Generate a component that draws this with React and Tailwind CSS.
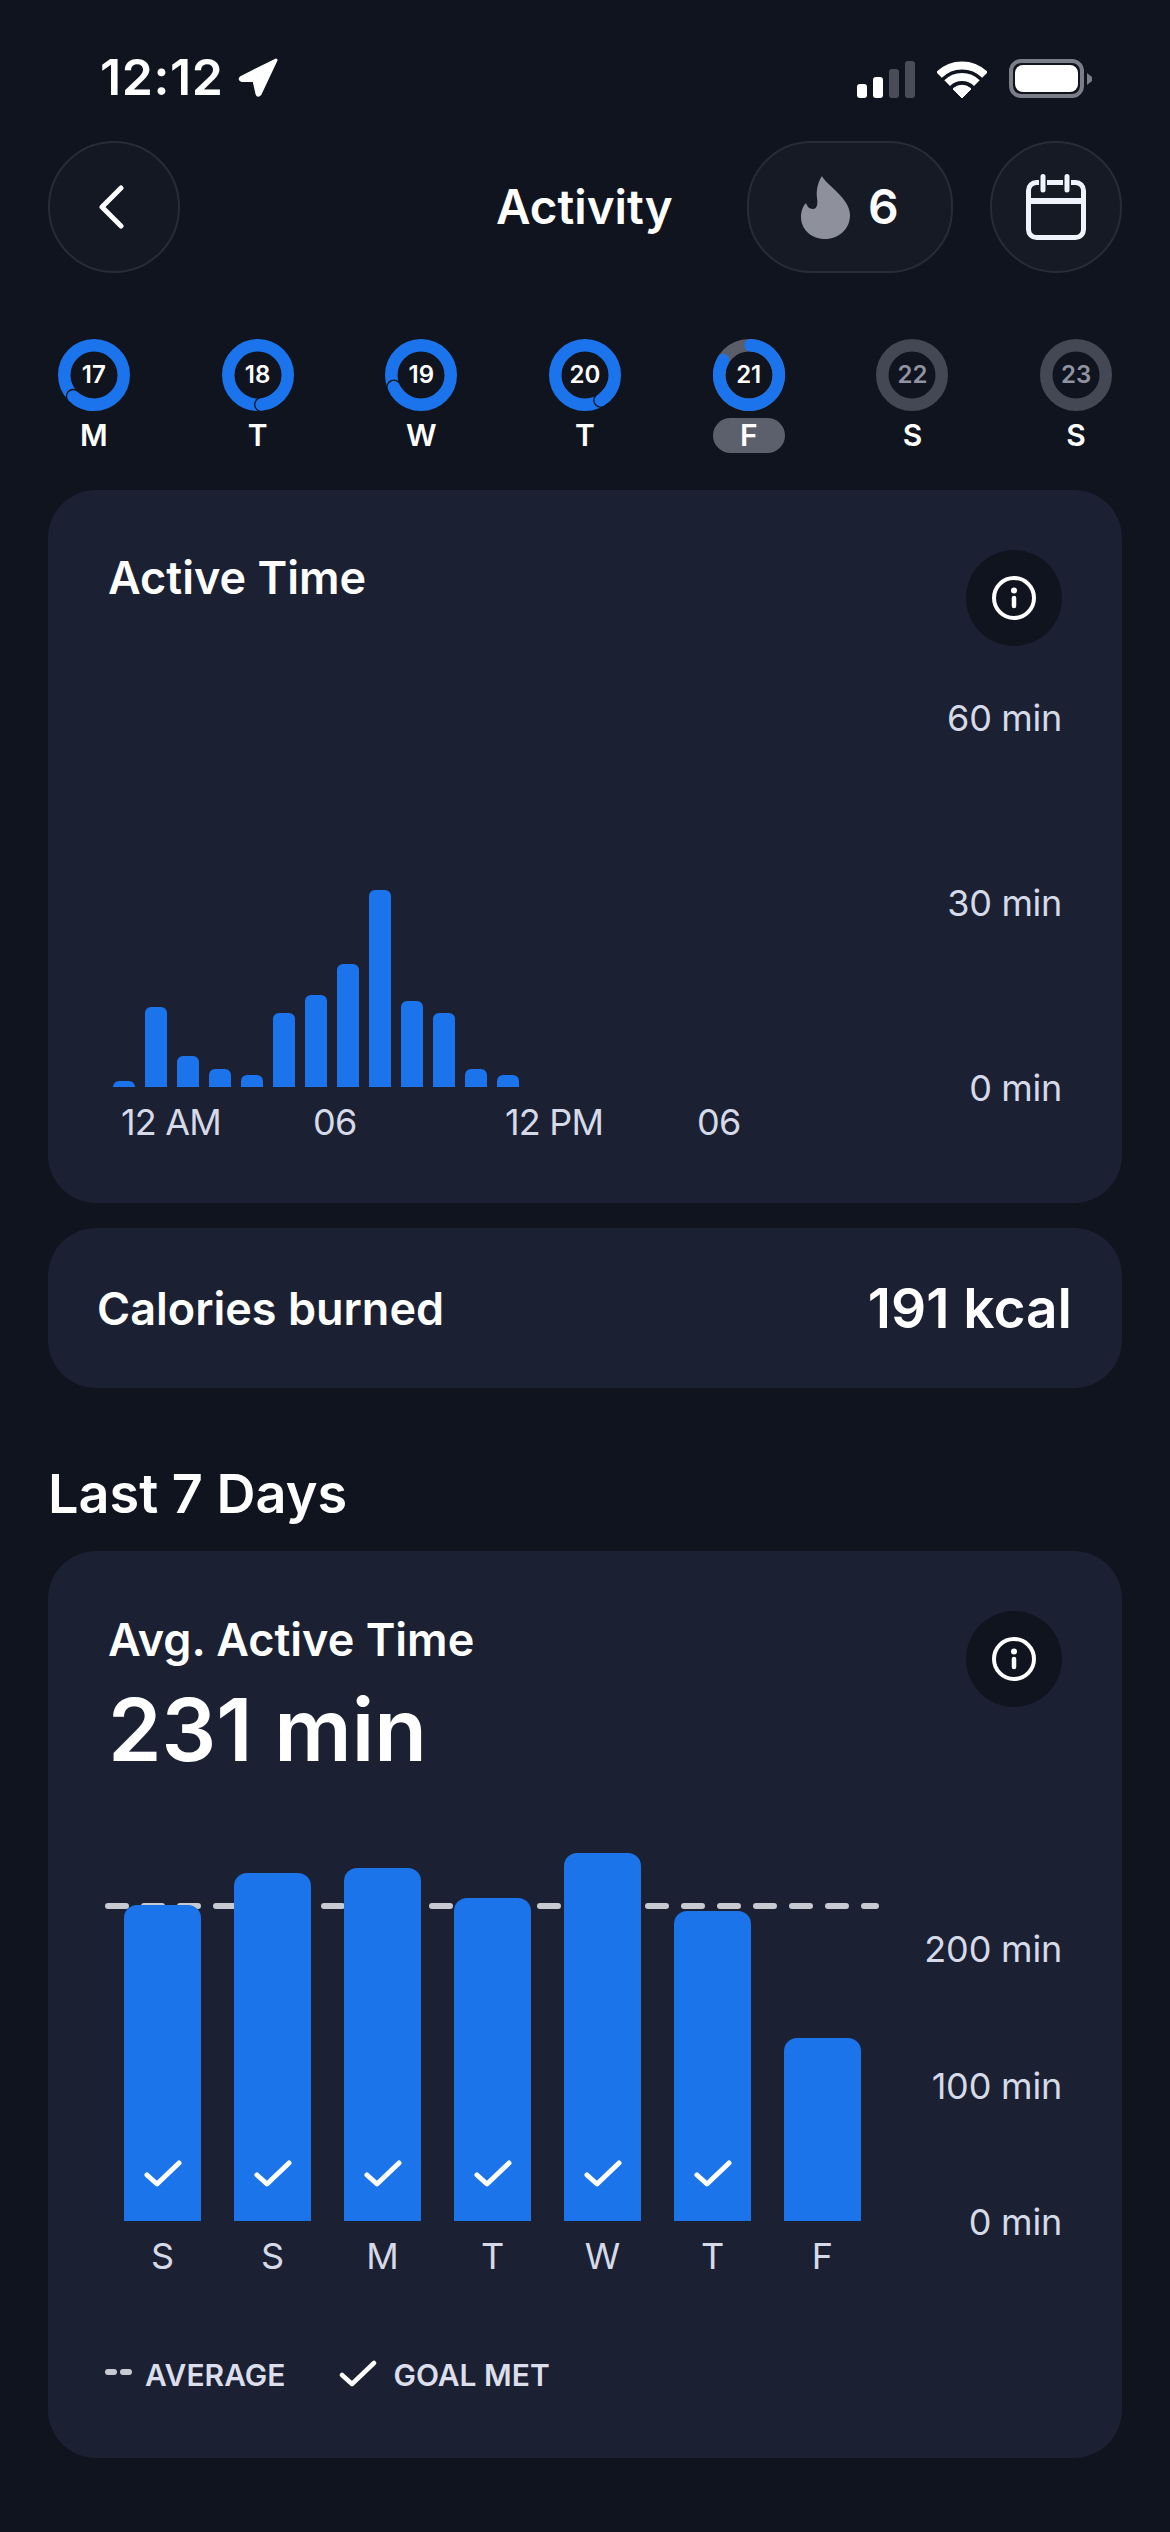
import React from 'react';

const hourly = [6, 80, 31, 18, 12, 74, 92, 123, 197, 86, 74, 18, 12];

const weekly = [
  { day: 'S', h: 316, met: true },
  { day: 'S', h: 348, met: true },
  { day: 'M', h: 353, met: true },
  { day: 'T', h: 323, met: true },
  { day: 'W', h: 368, met: true },
  { day: 'T', h: 310, met: true },
  { day: 'F', h: 183, met: false },
];

const days = [
  { num: 17, letter: 'M', end: 224 },
  { num: 18, letter: 'T', end: 173 },
  { num: 19, letter: 'W', end: 246 },
  { num: 20, letter: 'T', end: 148 },
  { num: 21, letter: 'F', end: 300, today: true },
  { num: 22, letter: 'S' },
  { num: 23, letter: 'S' },
];

// point on the ring, degrees clockwise from the top
const polar = (deg, r = 29.75) => {
  const a = (deg * Math.PI) / 180;
  return [36 + r * Math.sin(a), 36 - r * Math.cos(a)];
};

function arc(from, to) {
  const [x1, y1] = polar(from);
  const [x2, y2] = polar(to);
  const large = to - from > 180 ? 1 : 0;
  return `M${x1} ${y1} A29.75 29.75 0 ${large} 1 ${x2} ${y2}`;
}

function Ring({ end, today }) {
  if (end === undefined) {
    return (
      <svg width="72" height="72" viewBox="0 0 72 72">
        <circle cx="36" cy="36" r="29.75" fill="none" stroke="#434854" strokeWidth="12.5" />
      </svg>
    );
  }
  if (today) {
    return (
      <svg width="72" height="72" viewBox="0 0 72 72">
        <circle cx="36" cy="36" r="29.75" fill="none" stroke="#5b5e69" strokeWidth="12.5" />
        <path d={arc(3, end)} fill="none" stroke="#1b74ec" strokeWidth="12.5" strokeLinecap="round" />
      </svg>
    );
  }
  const [cx, cy] = polar(end);
  return (
    <svg width="72" height="72" viewBox="0 0 72 72">
      <circle cx="36" cy="36" r="29.75" fill="none" stroke="#1b74ec" strokeWidth="12.5" />
      <circle cx={cx} cy={cy} r="7.6" fill="#10141f" />
      <path d={arc(end - 40, end)} fill="none" stroke="#1b74ec" strokeWidth="12.5" strokeLinecap="round" />
    </svg>
  );
}

function InfoButton() {
  return (
    <div className="w-[96px] h-[96px] rounded-full bg-[#10141f] flex items-center justify-center shrink-0">
      <svg width="44" height="44" viewBox="0 0 44 44" fill="none">
        <circle cx="22" cy="22" r="20" stroke="#fff" strokeWidth="4" />
        <circle cx="22" cy="14.5" r="3" fill="#fff" />
        <path d="M22 22v8" stroke="#fff" strokeWidth="4.5" strokeLinecap="round" />
      </svg>
    </div>
  );
}

function Check({ w = 38, h = 27, sw = 5 }) {
  return (
    <svg width={w} height={h} viewBox="0 0 38 27" fill="none">
      <path d="M3 15l10 9L35 3" stroke="#fff" strokeWidth={sw} strokeLinecap="round" strokeLinejoin="round" />
    </svg>
  );
}

function StatusBar() {
  return (
    <div className="h-[141px] pt-[50px] pl-[100px] pr-[77px] flex items-start justify-between">
      <div className="flex items-center gap-[14px] h-[55px]">
        <span className="text-[50px] leading-[55px] font-semibold text-white tracking-[0.6px]">12:12</span>
        <svg width="40" height="39" viewBox="0 0 40 39">
          <path d="M38 2L3 19.5Q1 21.5 4 22.5L16 22.5L19 36Q20 38.5 22 36Z" fill="#fff" stroke="#fff" strokeWidth="3" strokeLinejoin="round" />
        </svg>
      </div>
      <div className="flex items-end gap-[22px] h-[48px] pt-[8px]">
        <div className="flex items-end gap-[6px] h-[37px]">
          <div className="w-[10px] h-[14px] rounded-[3px] bg-white" />
          <div className="w-[10px] h-[21px] rounded-[3px] bg-white" />
          <div className="w-[10px] h-[29px] rounded-[3px] bg-[#4a4d58]" />
          <div className="w-[10px] h-[37px] rounded-[3px] bg-[#4a4d58]" />
        </div>
        <svg width="50" height="37" viewBox="0 0 50 37" fill="none">
          <path d="M2 14A32.5 32.5 0 0 1 48 14" stroke="#fff" strokeWidth="8" />
          <path d="M10.15 22.15A21 21 0 0 1 39.85 22.15" stroke="#fff" strokeWidth="8" />
          <path d="M25 37L16 28A12.7 12.7 0 0 1 34 28Z" fill="#fff" stroke="#fff" strokeLinejoin="round" />
        </svg>
        <div className="flex items-center gap-[3px]">
          <div className="w-[75px] h-[39px] rounded-[12px] border-[4px] border-[#7b7d88] p-[2px]">
            <div className="w-full h-full rounded-[8px] bg-white" />
          </div>
          <svg width="6" height="12" viewBox="0 0 6 12">
            <path d="M0 0L5 4V8L0 12Z" fill="#7b7d88" />
          </svg>
        </div>
      </div>
    </div>
  );
}

function NavBar() {
  return (
    <div className="mx-[48px] h-[132px] flex items-center">
      <div className="w-[132px] h-[132px] rounded-full bg-[#141822] border-[2px] border-[#282c38] flex items-center justify-center pr-[7px]">
        <svg width="28" height="44" viewBox="0 0 28 44" fill="none">
          <path d="M24 3L5 22l19 19" stroke="#fff" strokeWidth="5" strokeLinecap="round" strokeLinejoin="round" />
        </svg>
      </div>
      <div className="ml-[316px] text-[47.5px] leading-[60px] font-semibold text-white">Activity</div>
      <div className="ml-auto flex items-center gap-[37px]">
        <div className="w-[206px] h-[132px] rounded-[64px] bg-[#161a24] border-[2px] border-[#282c38] flex items-center justify-start pl-[52px] gap-[18px]">
          <svg width="49" height="63" viewBox="0 0 49 63">
            <path d="M21 0C25 9 49 22 49 39C49 53 38 63 24 63C10 63 0 53 0 41C0 35 2 30 5 27C6 30 8 33 12 33C16 33 17 28 16 22C15 14 17 6 21 0Z" fill="#8e909c" />
          </svg>
          <span className="text-[48px] leading-[60px] font-semibold text-white">6</span>
        </div>
        <div className="w-[132px] h-[132px] rounded-full bg-[#161a24] border-[2px] border-[#282c38] flex items-center justify-center">
          <svg width="60" height="66" viewBox="0 0 60 66" fill="none">
            <rect x="2.5" y="8.5" width="55" height="55" rx="8" stroke="#f0f2fc" strokeWidth="5" />
            <path d="M2.5 27h55" stroke="#f0f2fc" strokeWidth="6" />
            <path d="M17 3v9M41 3v9" stroke="#161a24" strokeWidth="8" />
            <path d="M17 2.5v13.5M41 2.5v13.5" stroke="#f0f2fc" strokeWidth="5" strokeLinecap="round" />
          </svg>
        </div>
      </div>
    </div>
  );
}

function WeekStrip() {
  return (
    <div className="mx-[12px] mt-[66px] grid grid-cols-7">
      {days.map((d) => (
        <div key={d.num} className="flex flex-col items-center">
          <div className="relative w-[72px] h-[72px]">
            <Ring end={d.end} today={d.today} />
            <div className={d.end === undefined
              ? 'absolute inset-0 flex items-center justify-center text-[24px] font-semibold text-[#8f92a0]'
              : 'absolute inset-0 flex items-center justify-center text-[24px] font-semibold text-white'}>
              {d.num}
            </div>
          </div>
          <div className={d.today
            ? 'mt-[7px] w-[72px] h-[35px] rounded-full bg-[#5c5f6c] flex items-center justify-center text-[30px] font-semibold text-white'
            : 'mt-[7px] w-[72px] h-[35px] flex items-center justify-center text-[30px] font-semibold text-white'}>
            {d.letter}
          </div>
        </div>
      ))}
    </div>
  );
}

function ActiveTimeCard() {
  return (
    <div className="mx-[48px] mt-[37px] h-[713px] rounded-[48px] bg-[#1b2133] px-[60px] pt-[60px]">
      <div className="flex justify-between items-start">
        <div className="text-[45px] leading-[56px] font-semibold text-white">Active Time</div>
        <InfoButton />
      </div>
      <div className="mt-[50px] flex justify-between items-start">
        <div>
          <div className="h-[391px] pl-[5px] flex items-end gap-[10px]">
            {hourly.map((h, i) => (
              <div key={i} className="w-[22px] rounded-t-[6px] bg-[#1b74ec]" style={{ height: h }} />
            ))}
          </div>
          <div className="mt-[13px] pl-[13px] w-[781px] grid grid-cols-4 text-[36px] leading-[44px] tracking-[-0.8px] text-[#d6dae8]">
            <span>12 AM</span>
            <span>06</span>
            <span>12 PM</span>
            <span>06</span>
          </div>
        </div>
        <div className="h-[414px] flex flex-col justify-between items-end text-[36px] leading-[44px] tracking-[-0.3px] text-[#d6dae8]">
          <span>60 min</span>
          <span>30 min</span>
          <span>0 min</span>
        </div>
      </div>
    </div>
  );
}

function CaloriesCard() {
  return (
    <div className="mx-[48px] mt-[25px] h-[160px] rounded-[48px] bg-[#1b2133] pl-[49px] pr-[50px] flex items-center justify-between">
      <span className="text-[45px] pt-[2px] font-semibold text-white">Calories burned</span>
      <span className="text-[55px] font-semibold text-white">191 kcal</span>
    </div>
  );
}

function WeeklyCard() {
  return (
    <div className="mx-[48px] mt-[27px] h-[907px] rounded-[48px] bg-[#1b2133] px-[60px] pt-[60px]">
      <div className="flex justify-between items-start">
        <div>
          <div className="text-[45px] leading-[58px] font-semibold text-white">Avg. Active Time</div>
          <div className="mt-[11px] text-[86px] leading-[100px] font-semibold text-white">231 min</div>
        </div>
        <InfoButton />
      </div>
      <div className="mt-[60px] flex justify-between items-start">
        <div className="w-[771px]">
          <div className="relative h-[381px] pl-[16px] flex items-end gap-[33px]">
            <svg className="absolute left-[-3px] top-[63px]" width="774" height="6" viewBox="0 0 774 6">
              <path d="M3 3H771" stroke="#c8cad2" strokeWidth="6" strokeDasharray="18 18" strokeLinecap="round" />
            </svg>
            {weekly.map((b, i) => (
              <div
                key={i}
                className="relative w-[77px] rounded-t-[13px] bg-[#1b74e9] flex items-end justify-center pb-[34px]"
                style={{ height: b.h }}
              >
                {b.met && <Check />}
              </div>
            ))}
          </div>
          <div className="mt-[13px] pl-[16px] flex gap-[33px] text-[36px] leading-[44px] text-[#d6dae8]">
            {weekly.map((b, i) => (
              <span key={i} className="w-[77px] text-center">{b.day}</span>
            ))}
          </div>
        </div>
        <div className="mt-[87px] h-[317px] flex flex-col justify-between items-end text-[36px] leading-[44px] tracking-[-0.2px] text-[#d6dae8]">
          <span>200 min</span>
          <span>100 min</span>
          <span>0 min</span>
        </div>
      </div>
      <div className="mt-[75px] -ml-[3px] h-[44px] flex items-center text-[30px] font-semibold text-[#dcdfeb]">
        <div className="flex gap-[3px] mb-[6px]">
          <div className="w-[12px] h-[6px] rounded-full bg-[#c8cad2]" />
          <div className="w-[12px] h-[6px] rounded-full bg-[#c8cad2]" />
        </div>
        <span className="ml-[13px]">AVERAGE</span>
        <span className="ml-[54px] mb-[4px] flex"><Check w={38} h={27} sw={4.5} /></span>
        <span className="ml-[16px]">GOAL MET</span>
      </div>
    </div>
  );
}

export default function App() {
  return (
    <div className="w-[1170px] h-[2532px] overflow-hidden bg-[#10141f] font-[Inter,sans-serif]">
      <StatusBar />
      <NavBar />
      <WeekStrip />
      <ActiveTimeCard />
      <CaloriesCard />
      <div className="mx-[48px] mt-[76px] h-[60px] text-[54px] leading-[60px] font-semibold text-white">Last 7 Days</div>
      <WeeklyCard />
    </div>
  );
}
